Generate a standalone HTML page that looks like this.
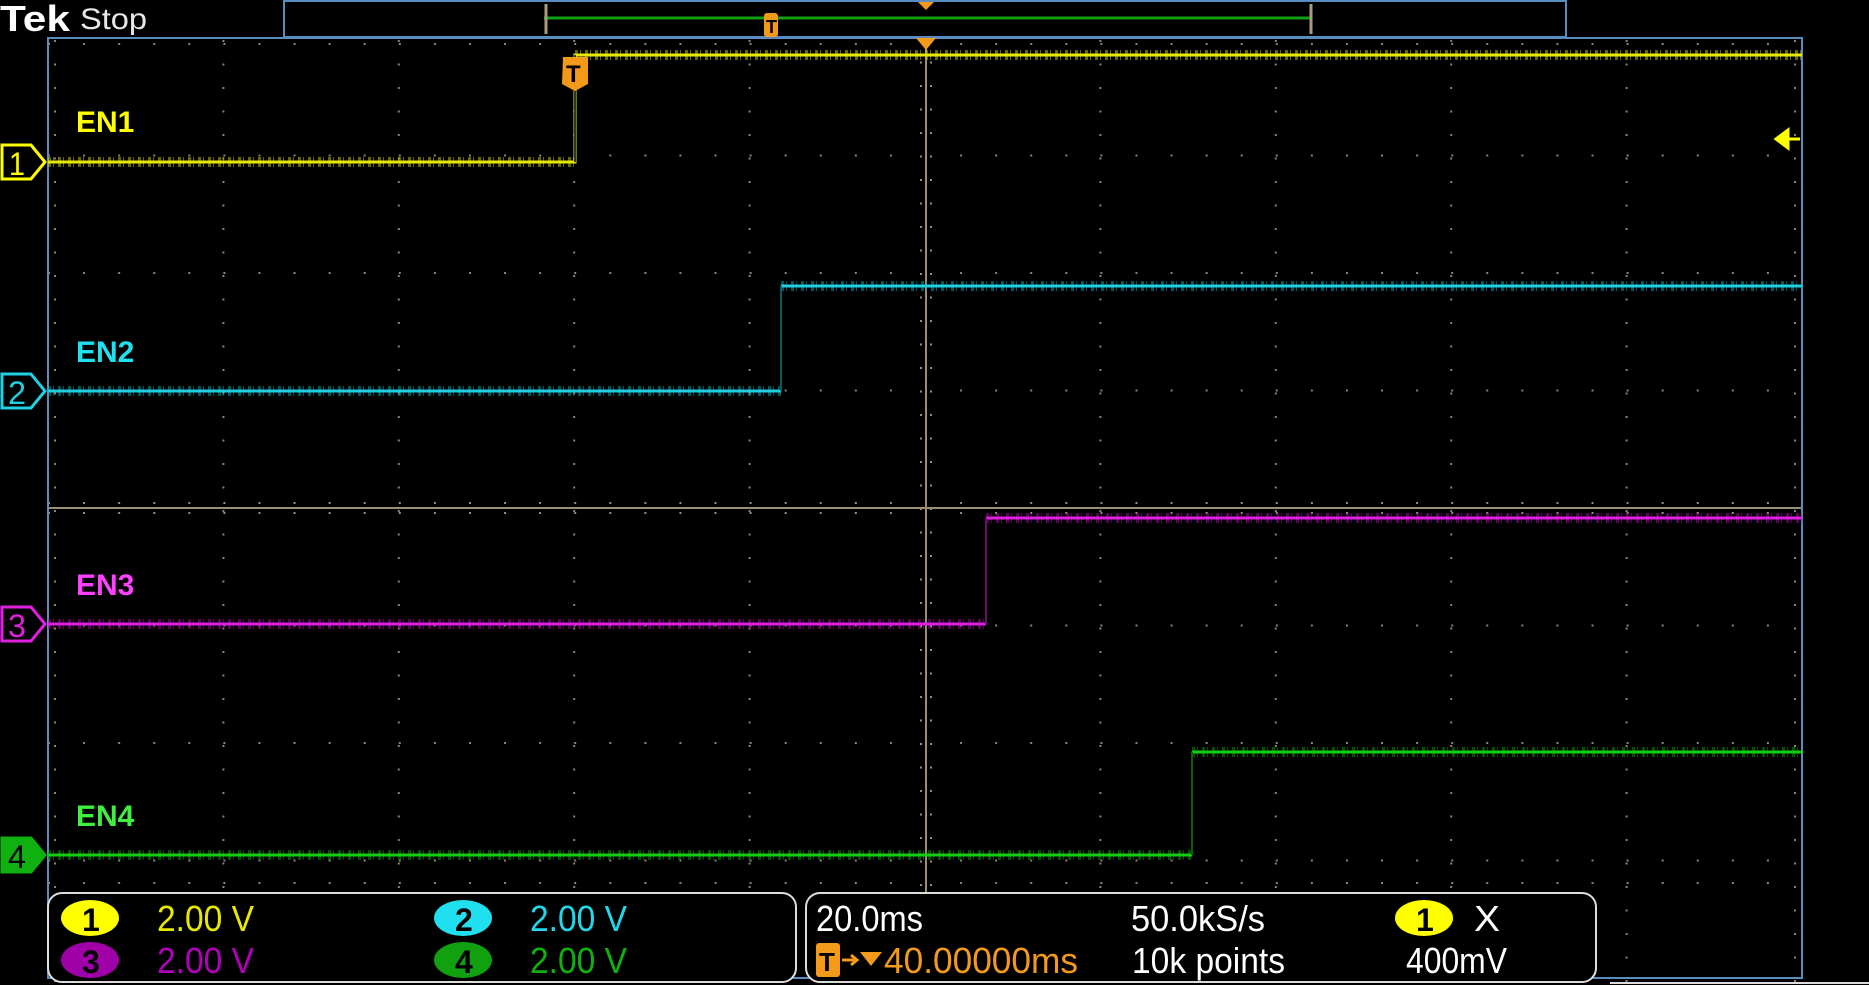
<!DOCTYPE html>
<html><head><meta charset="utf-8"><style>
html,body{margin:0;padding:0;background:#000;width:1869px;height:985px;overflow:hidden}
svg{position:absolute;left:0;top:0}
text{font-family:"Liberation Sans",sans-serif}
</style></head><body>
<svg width="1869" height="985" viewBox="0 0 1869 985" xmlns="http://www.w3.org/2000/svg">
<rect width="1869" height="985" fill="#000"/>
<g stroke="#8a8570" stroke-width="2">
<line x1="223.4" y1="40" x2="223.4" y2="985" stroke-dasharray="2 21.5"/>
<line x1="398.8" y1="40" x2="398.8" y2="985" stroke-dasharray="2 21.5"/>
<line x1="574.2" y1="40" x2="574.2" y2="985" stroke-dasharray="2 21.5"/>
<line x1="749.6" y1="40" x2="749.6" y2="985" stroke-dasharray="2 21.5"/>
<line x1="1100.4" y1="40" x2="1100.4" y2="985" stroke-dasharray="2 21.5"/>
<line x1="1275.8" y1="40" x2="1275.8" y2="985" stroke-dasharray="2 21.5"/>
<line x1="1451.2" y1="40" x2="1451.2" y2="985" stroke-dasharray="2 21.5"/>
<line x1="1626.6" y1="40" x2="1626.6" y2="985" stroke-dasharray="2 21.5"/>
<line x1="55" y1="40" x2="55" y2="985" stroke-dasharray="2 21.5"/>
<line x1="1795" y1="40" x2="1795" y2="985" stroke-dasharray="2 21.5"/>
<line x1="48" y1="155.5" x2="1802" y2="155.5" stroke-dasharray="2 33.08"/>
<line x1="48" y1="273" x2="1802" y2="273" stroke-dasharray="2 33.08"/>
<line x1="48" y1="390.5" x2="1802" y2="390.5" stroke-dasharray="2 33.08"/>
<line x1="48" y1="625.5" x2="1802" y2="625.5" stroke-dasharray="2 33.08"/>
<line x1="48" y1="743" x2="1802" y2="743" stroke-dasharray="2 33.08"/>
<line x1="48" y1="860.5" x2="1802" y2="860.5" stroke-dasharray="2 33.08"/>
<line x1="48" y1="44" x2="1802" y2="44" stroke-dasharray="2 33.08"/>
<line x1="48" y1="883" x2="1802" y2="883" stroke-dasharray="2 33.08"/>
</g>
<g stroke="#9a8f72" stroke-width="2">
<line x1="48" y1="508" x2="1802" y2="508"/>
<line x1="926" y1="38" x2="926" y2="893"/>
<line x1="48" y1="503" x2="1802" y2="503" stroke-dasharray="2 33.08"/>
<line x1="48" y1="513" x2="1802" y2="513" stroke-dasharray="2 33.08"/>
<line x1="921" y1="38" x2="921" y2="893" stroke-dasharray="2 21.5"/>
<line x1="931" y1="38" x2="931" y2="893" stroke-dasharray="2 21.5"/>
</g>
<rect x="48" y="38" width="1754" height="940" fill="none" stroke="#5a8cc0" stroke-width="2"/>
<g fill="none">
<path d="M48 162H575M575 55H1802" stroke="#c8c800" stroke-width="10" stroke-dasharray="3 2 1 4" opacity="0.5"/>
<path d="M48 162H575V55H1802" stroke="#e8e800" stroke-width="3"/>
<path d="M575 162V55" stroke="#333" stroke-width="2"/>
<path d="M48 391H781M781 286H1802" stroke="#00a8b8" stroke-width="10" stroke-dasharray="3 2 1 4" opacity="0.5"/>
<path d="M48 391H781H781M781 286H1802" stroke="#20d0e0" stroke-width="3"/>
<path d="M781 391V286" stroke="#0a5a60" stroke-width="2"/>
<path d="M48 624H986M986 518H1802" stroke="#b000b0" stroke-width="10" stroke-dasharray="3 2 1 4" opacity="0.5"/>
<path d="M48 624H986M986 518H1802" stroke="#e020e0" stroke-width="3"/>
<path d="M986 624V518" stroke="#6a106a" stroke-width="2"/>
<path d="M48 855H1192M1192 752H1802" stroke="#00a000" stroke-width="10" stroke-dasharray="3 2 1 4" opacity="0.5"/>
<path d="M48 855H1192M1192 752H1802" stroke="#10d010" stroke-width="3"/>
<path d="M1192 855V752" stroke="#0a600a" stroke-width="2"/>
</g>
<g font-weight="bold" font-size="30">
<text x="76" y="132" fill="#ffff00">EN1</text>
<text x="76" y="362" fill="#20e0f0">EN2</text>
<text x="76" y="595" fill="#ff40ff">EN3</text>
<text x="76" y="826" fill="#40f040">EN4</text>
</g>
<path d="M2 145H31L45 162L31 179H2Z" fill="#000" stroke="#ffff00" stroke-width="3"/>
<text x="9" y="175" font-size="32" fill="#ffff00" textLength="16" lengthAdjust="spacingAndGlyphs">1</text>
<path d="M2 374H31L45 391L31 408H2Z" fill="#000" stroke="#20d0e0" stroke-width="3"/>
<text x="8" y="404" font-size="32" fill="#20d0e0" textLength="18" lengthAdjust="spacingAndGlyphs">2</text>
<path d="M2 607H31L45 624L31 641H2Z" fill="#000" stroke="#e020e0" stroke-width="3"/>
<text x="8" y="637" font-size="32" fill="#e020e0" textLength="18" lengthAdjust="spacingAndGlyphs">3</text>
<path d="M2 838H31L45 855L31 872H2Z" fill="#10b010" stroke="#10b010" stroke-width="3"/>
<text x="8" y="868" font-size="32" fill="#000" textLength="18" lengthAdjust="spacingAndGlyphs">4</text>
<path d="M1776 139L1788 130V148Z M1786 139H1800" fill="#ffff00" stroke="#ffff00" stroke-width="3"/>
<path d="M563 57H588V84L575 91L562 84Z" fill="#f39a1a"/>
<text x="566" y="82" font-size="24" font-weight="bold" fill="#000">T</text>
<path d="M916 38H936L926 50Z" fill="#f39a1a"/>
<text x="0" y="31" font-family="Liberation Serif" font-weight="bold" font-size="36" fill="#fff" textLength="70" lengthAdjust="spacingAndGlyphs">Tek</text>
<text x="80" y="29" font-size="30" fill="#e8e8e8" textLength="67" lengthAdjust="spacingAndGlyphs">Stop</text>
<rect x="284" y="1" width="1282" height="36" fill="#000" stroke="#5a8cc0" stroke-width="2"/>
<line x1="544" y1="18" x2="1311" y2="18" stroke="#10a010" stroke-width="3"/>
<path d="M546 4V34M1311 4V34" stroke="#a89c80" stroke-width="3"/>
<rect x="764" y="13" width="14" height="24" rx="3" fill="#f39a1a"/>
<text x="766" y="33" font-size="18" font-weight="bold" fill="#000">T</text>
<path d="M918 2H934L926 10Z" fill="#f39a1a"/>
<rect x="48" y="893" width="748" height="89" rx="14" fill="#000" stroke="#ddd" stroke-width="2"/>
<rect x="806" y="893" width="790" height="89" rx="14" fill="#000" stroke="#ddd" stroke-width="2"/>
<line x1="1610" y1="983" x2="1869" y2="983" stroke="#ddd" stroke-width="2"/>
<g font-size="36" lengthAdjust="spacingAndGlyphs">
<ellipse cx="90" cy="918" rx="29" ry="18" fill="#ffff00"/><text x="82" y="931" font-weight="bold" font-size="32" fill="#000">1</text>
<text x="157" y="931" fill="#e8e800" textLength="97" lengthAdjust="spacingAndGlyphs">2.00 V</text>
<ellipse cx="463" cy="918" rx="29" ry="18" fill="#20e0f0"/><text x="455" y="931" font-weight="bold" font-size="32" fill="#000">2</text>
<text x="530" y="931" fill="#20d8e8" textLength="97" lengthAdjust="spacingAndGlyphs">2.00 V</text>
<ellipse cx="90" cy="960" rx="29" ry="18" fill="#a000a8"/><text x="82" y="973" font-weight="bold" font-size="32" fill="#000">3</text>
<text x="157" y="973" fill="#b000b8" textLength="97" lengthAdjust="spacingAndGlyphs">2.00 V</text>
<ellipse cx="463" cy="960" rx="29" ry="18" fill="#10a010"/><text x="455" y="973" font-weight="bold" font-size="32" fill="#000">4</text>
<text x="530" y="973" fill="#10b010" textLength="97" lengthAdjust="spacingAndGlyphs">2.00 V</text>
<text x="816" y="931" fill="#fff" textLength="107" lengthAdjust="spacingAndGlyphs">20.0ms</text>
<text x="1131" y="931" fill="#fff" textLength="134" lengthAdjust="spacingAndGlyphs">50.0kS/s</text>
<ellipse cx="1424" cy="918" rx="29" ry="18" fill="#ffff00"/><text x="1416" y="931" font-weight="bold" font-size="32" fill="#000">1</text>
<text x="1474" y="931" fill="#fff" textLength="26" lengthAdjust="spacingAndGlyphs">X</text>
<rect x="816" y="943" width="24" height="34" rx="3" fill="#f39a1a"/>
<text x="819" y="971" font-size="26" font-weight="bold" fill="#000">T</text>
<path d="M842 960H856M851 955L857 960L851 965" stroke="#f39a1a" stroke-width="3" fill="none"/>
<path d="M860 952H882L871 966Z" fill="#f39a1a"/>
<text x="884" y="973" fill="#f39a1a" textLength="194" lengthAdjust="spacingAndGlyphs">40.00000ms</text>
<text x="1132" y="973" fill="#fff" textLength="153" lengthAdjust="spacingAndGlyphs">10k points</text>
<text x="1406" y="973" fill="#fff" textLength="101" lengthAdjust="spacingAndGlyphs">400mV</text>
</g>
</svg>
</body></html>
